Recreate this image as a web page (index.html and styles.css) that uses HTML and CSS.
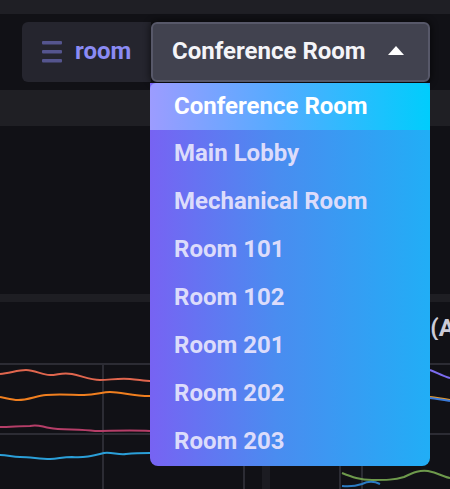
FILE: index.html
```html
<!DOCTYPE html>
<html>
<head>
<meta charset="utf-8">
<link rel="stylesheet" href="styles.css">
</head>
<body>
<div class="topbar"></div>
<div class="toolbar">
  <div class="var-group">
    <div class="var-label">
      <svg class="menu-icon" width="20" height="22" viewBox="0 0 20 22"><rect x="0" y="0" width="20" height="3.5" rx="1"/><rect x="0" y="9" width="20" height="3.5" rx="1"/><rect x="0" y="18" width="20" height="3.5" rx="1"/></svg>
      <span class="var-name">room</span>
    </div>
    <div class="var-select">
      <span>Conference Room</span>
      <svg class="caret" width="18" height="10" viewBox="0 0 18 10"><path d="M1 10 L9 1 L17 10 Z" fill="#fff"/></svg>
    </div>
    <ul class="menu">
      <li class="item active">Conference Room</li>
      <li class="item">Main Lobby</li>
      <li class="item">Mechanical Room</li>
      <li class="item">Room 101</li>
      <li class="item">Room 102</li>
      <li class="item">Room 201</li>
      <li class="item">Room 202</li>
      <li class="item">Room 203</li>
    </ul>
  </div>
</div>
<div class="band band-row"></div>
<div class="spacer"></div>
<div class="band band-thin"></div>
<div class="panels">
  <div class="panel-title"><span class="title-lead">Energy </span>(All)</div>
  <svg class="chart" width="450" height="150" viewBox="0 340 450 150">
    <g stroke="#2c2c34" stroke-width="2" fill="none">
      <line x1="0" y1="364" x2="450" y2="364"/>
      <line x1="0" y1="434" x2="450" y2="434"/>
      <line x1="103" y1="364" x2="103" y2="489"/>
      <line x1="244" y1="364" x2="244" y2="489"/>
      <line x1="340" y1="364" x2="340" y2="489"/>
      <line x1="362" y1="364" x2="362" y2="489"/>
    </g>
    <rect x="262" y="462" width="8" height="30" fill="#1c1c22"/>
    <g fill="none" stroke-width="2" stroke-linejoin="round">
      <path d="M0 374 C10 373 18 370 26 370 C35 370 42 375 50 375 C58 375 62 372 72 374 C82 376 90 380 100 380 C110 380 118 378 130 379 C140 380 146 381 150 381" stroke="#e0664e"/>
      <path d="M0 397 C6 398 12 400 18 400 C28 400 36 396 46 395 C60 394 72 395 84 395 C96 395 102 392 110 392 C122 392 132 396 150 396" stroke="#f07f1f"/>
      <path d="M0 427 C10 427 20 426 30 426 C38 424 42 427 50 428 C60 430 80 429 95 431 C110 431 130 430 150 431" stroke="#b53e68"/>
      <path d="M0 455 C8 455 12 457 20 457 C30 457 40 459 50 459 C58 459 62 457 72 457 C84 458 92 456 104 453 C112 452 118 455 126 454 C136 453 142 453 150 453" stroke="#2b9fd8"/>
      <path d="M430 370 C436 372 442 376 450 378" stroke="#7c6cf0"/>
      <path d="M430 397 C438 398 444 399 450 400" stroke="#e89a2a"/>
      <path d="M430 398 C438 399 444 400 450 401" stroke="#3a7ad8"/>
      <path d="M342 473 C352 477 360 480 372 480 C386 480 394 480 404 477 C414 472 420 470 428 471 C438 473 444 477 450 478" stroke="#6e9a4c"/>
      <path d="M342 486 C350 487 356 486 362 484 C368 481 374 481 380 484" stroke="#2b7cc4"/>
    </g>
  </svg>
</div>
</body>
</html>
```
FILE: styles.css
```css
* { box-sizing: border-box; }
html, body {
  margin: 0;
  padding: 0;
  width: 450px;
  height: 489px;
  overflow: hidden;
  background: #111116;
  font-family: Roboto, "Liberation Sans", sans-serif;
}
.topbar {
  height: 14px;
  background: #1f1f25;
}
.toolbar {
  height: 76px;
  padding: 8px 0 0 22px;
}
.var-group {
  position: relative;
  display: flex;
  width: 408px;
  height: 60px;
  z-index: 5;
}
.var-label {
  display: flex;
  align-items: center;
  gap: 13px;
  width: 129px;
  padding-left: 20px;
  background: #25252e;
  border-radius: 6px 0 0 6px;
}
.menu-icon { fill: #55558e; }
.var-name {
  color: #8b8bf4;
  font-weight: 700;
  font-size: 24px;
  margin-top: -3px;
}
.var-select {
  flex: 1;
  display: flex;
  align-items: center;
  justify-content: space-between;
  padding: 0 23px 0 19px;
  background: #41424f;
  border: 2px solid #575869;
  border-radius: 6px;
  box-shadow: 0 0 6px 2px rgba(0, 0, 0, 0.45);
  color: #f4f4f8;
  font-weight: 700;
  font-size: 24px;
}
.var-select span { margin-top: -2px; }
.caret { margin-top: -4px; }
.menu {
  position: absolute;
  left: 128px;
  top: 61px;
  width: 280px;
  margin: 0;
  padding: 0;
  list-style: none;
  border-radius: 0 0 8px 8px;
  background: linear-gradient(90deg, #7763f3 0%, #4a8cf0 45%, #21aef6 100%);
  overflow: hidden;
}
.item {
  height: 48px;
  line-height: 47px;
  padding-left: 24px;
  color: #dcdcfb;
  font-weight: 700;
  font-size: 24px;
}
.item.active {
  height: 47px;
  line-height: 46px;
  color: #ffffff;
  background: linear-gradient(90deg, #9c9cff 0%, #55abff 45%, #00cdfc 100%);
  border-radius: 6px 6px 0 0;
}
.band-row {
  height: 36px;
  background: #1f1f24;
}
.spacer { height: 168px; }
.band-thin {
  height: 8px;
  background: #1e1e23;
}
.panels {
  position: relative;
  height: 187px;
}
.panel-title {
  height: 38px;
  padding: 12px 0 0 350px;
  color: #cccbd8;
  font-weight: 700;
  font-size: 24px;
  line-height: 28px;
  white-space: nowrap;
  overflow: hidden;
}
.chart { display: block; }
```
